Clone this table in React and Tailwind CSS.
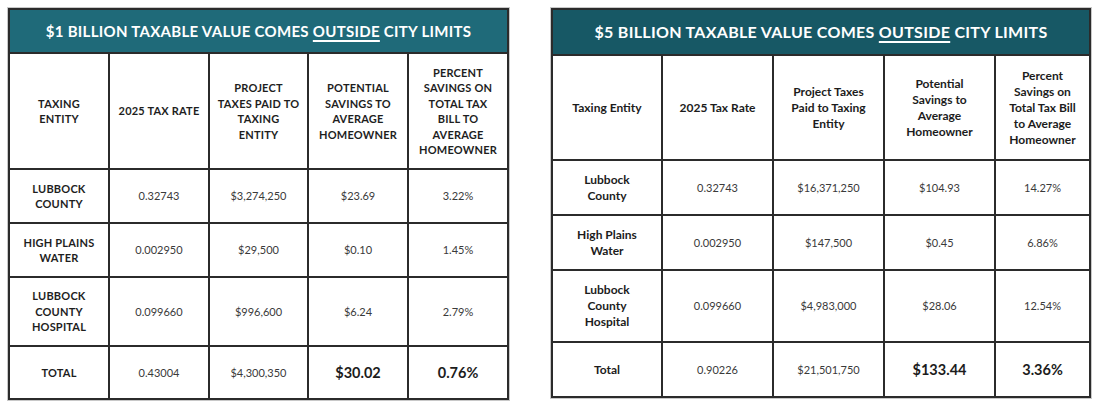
import React from "react";

const leftRows = [
    { name: ["LUBBOCK", "COUNTY"], rate: "0.32743", taxes: "$3,274,250", savings: "$23.69", pct: "3.22%" },
    { name: ["HIGH PLAINS", "WATER"], rate: "0.002950", taxes: "$29,500", savings: "$0.10", pct: "1.45%" },
    { name: ["LUBBOCK", "COUNTY", "HOSPITAL"], rate: "0.099660", taxes: "$996,600", savings: "$6.24", pct: "2.79%" },
];

const rightRows = [
    { name: ["Lubbock", "County"], rate: "0.32743", taxes: "$16,371,250", savings: "$104.93", pct: "14.27%" },
    { name: ["High Plains", "Water"], rate: "0.002950", taxes: "$147,500", savings: "$0.45", pct: "6.86%" },
    { name: ["Lubbock", "County", "Hospital"], rate: "0.099660", taxes: "$4,983,000", savings: "$28.06", pct: "12.54%" },
];

const Cell = ({ children, className = "" }) => (
    <div className={"bg-white flex items-center justify-center text-center leading-[15.5px] " + className}>
        {children}
    </div>
);

const Lines = ({ lines }) => (
    <div>
        {lines.map((l, i) => (
            <div key={i}>{l}</div>
        ))}
    </div>
);

const TaxTable = ({ title, head, rows, total, cols, rowHeights, titleBg, titleSize, width, upper }) => {
    const headCls = upper
        ? "text-[11px] font-bold text-[#1e1e1e] tracking-[0.2px]"
        : "text-[12px] font-bold text-[#1c1c1c] leading-[16px]";
    const valCls = "text-[11px] font-normal text-[#3a3a3a]";
    return (
        <div className={"border-2 border-[#2b2b2b] shadow-[0_0_0_1px_#c8c8c8] " + width}>
            <div className={"flex items-center justify-center text-white font-bold tracking-[0.3px] " + titleSize + " " + titleBg + " " + rowHeights[0]}>
                <span>
                    {title[0]}
                    <span className="underline underline-offset-[3px] decoration-[1.5px]">OUTSIDE</span>
                    {title[1]}
                </span>
            </div>
            <div className={"grid gap-[2px] bg-[#2b2b2b] pt-[2px] " + cols}>
                {head.map((h, i) => (
                    <Cell key={i} className={headCls + " " + rowHeights[1]}>
                        <Lines lines={h} />
                    </Cell>
                ))}
                {rows.map((r, i) => (
                    <React.Fragment key={i}>
                        <Cell className={headCls + " " + rowHeights[2 + i]}>
                            <Lines lines={r.name} />
                        </Cell>
                        <Cell className={valCls}>{r.rate}</Cell>
                        <Cell className={valCls}>{r.taxes}</Cell>
                        <Cell className={valCls}>{r.savings}</Cell>
                        <Cell className={valCls}>{r.pct}</Cell>
                    </React.Fragment>
                ))}
                <Cell className={headCls + " " + rowHeights[5]}>{total.name}</Cell>
                <Cell className={valCls}>{total.rate}</Cell>
                <Cell className={valCls}>{total.taxes}</Cell>
                <Cell className="text-[14.5px] font-bold text-[#1c1c1c]">{total.savings}</Cell>
                <Cell className="text-[14.5px] font-bold text-[#1c1c1c]">{total.pct}</Cell>
            </div>
        </div>
    );
};

export default function App() {
    return (
        <div className="w-[1100px] h-[414px] bg-white flex items-start gap-[42px] pl-[8px] pt-[8px] font-['Lato',sans-serif]">
            <TaxTable
                title={["$1 BILLION TAXABLE VALUE COMES ", " CITY LIMITS"]}
                head={[
                    ["TAXING", "ENTITY"],
                    ["2025 TAX RATE"],
                    ["PROJECT", "TAXES PAID TO", "TAXING", "ENTITY"],
                    ["POTENTIAL", "SAVINGS TO", "AVERAGE", "HOMEOWNER"],
                    ["PERCENT", "SAVINGS ON", "TOTAL TAX", "BILL TO", "AVERAGE", "HOMEOWNER"],
                ]}
                rows={leftRows}
                total={{ name: "TOTAL", rate: "0.43004", taxes: "$4,300,350", savings: "$30.02", pct: "0.76%" }}
                cols="grid-cols-[98px_98px_97px_98px_98px]"
                rowHeights={["h-[42px]", "h-[114px]", "h-[52px]", "h-[52px]", "h-[67px]", "h-[51px]"]}
                titleBg="bg-[#1f6a79]"
                titleSize="text-[15px]"
                width="w-[501px]"
                upper
            />
            <TaxTable
                title={["$5 BILLION TAXABLE VALUE COMES ", " CITY LIMITS"]}
                head={[
                    ["Taxing Entity"],
                    ["2025 Tax Rate"],
                    ["Project Taxes", "Paid to Taxing", "Entity"],
                    ["Potential", "Savings to", "Average", "Homeowner"],
                    ["Percent", "Savings on", "Total Tax Bill", "to Average", "Homeowner"],
                ]}
                rows={rightRows}
                total={{ name: "Total", rate: "0.90226", taxes: "$21,501,750", savings: "$133.44", pct: "3.36%" }}
                cols="grid-cols-[108px_109px_109px_109px_93px]"
                rowHeights={["h-[44px]", "h-[103px]", "h-[53px]", "h-[53px]", "h-[70px]", "h-[53px]"]}
                titleBg="bg-[#175865]"
                titleSize="text-[16px]"
                width="w-[540px]"
            />
        </div>
    );
}
